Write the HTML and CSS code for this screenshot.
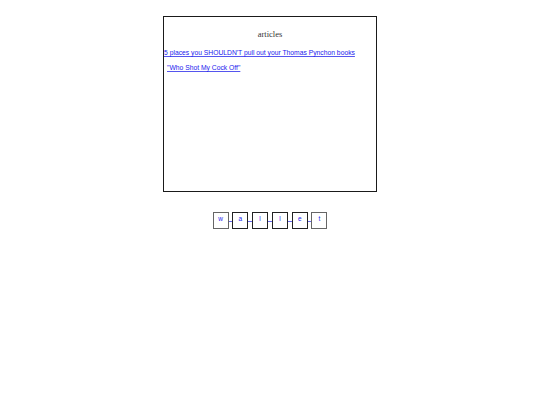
FILE: index.html
```html
<!DOCTYPE html>
<html>
<head>
<meta charset="utf-8">
<link rel="stylesheet" href="styles.css">
</head>
<body>
<div class="page">
  <div class="panel">
    <div class="title">articles</div>
    <div class="links">
      <a class="link first" href="#">5 places you SHOULDN'T pull out your Thomas Pynchon books</a>
      <a class="link second" href="#">"Who Shot My Cock Off"</a>
    </div>
  </div>
  <div class="wallet">
    <a class="tile edge" href="#">w</a><span class="sep"></span>
    <a class="tile" href="#">a</a><span class="sep"></span>
    <a class="tile" href="#">l</a><span class="sep"></span>
    <a class="tile" href="#">l</a><span class="sep"></span>
    <a class="tile" href="#">e</a><span class="sep"></span>
    <a class="tile edge" href="#">t</a>
  </div>
</div>
</body>
</html>
```
FILE: styles.css
```css
html, body {
  margin: 0;
  padding: 0;
  background: #ffffff;
}
.page {
  display: flex;
  flex-direction: column;
  align-items: center;
  padding-top: 16px;
}
.panel {
  box-sizing: border-box;
  width: 214px;
  height: 176px;
  border: 1px solid #1a1a1a;
  display: flex;
  flex-direction: column;
}
.title {
  font-family: "Liberation Serif", serif;
  font-size: 8.5px;
  color: #333;
  text-align: center;
  margin-top: 12px;
  line-height: 10px;
}
.links {
  display: flex;
  flex-direction: column;
  margin-top: 9px;
  gap: 5px;
}
.link {
  font-family: "Liberation Sans", Arial, sans-serif;
  font-size: 6.75px;
  line-height: 10px;
  color: #1a1aee;
  text-decoration: underline;
  text-decoration-color: #5555ee;
}
.first {
  margin-left: 0;
}
.second {
  margin-left: 3px;
}
.wallet {
  display: flex;
  align-items: center;
  margin-top: 20px;
}
.tile {
  box-sizing: border-box;
  width: 16px;
  height: 17px;
  border: 1px solid #222;
  font-family: "Liberation Sans", Arial, sans-serif;
  font-size: 6.5px;
  line-height: 6px;
  color: #2222ee;
  text-decoration: none;
  text-align: center;
  padding-top: 3px;
}
.tile.edge {
  border-color: #666;
}
.sep {
  width: 3.8px;
  height: 1px;
  background: #6666ee;
  margin-top: 1px;
}
```
